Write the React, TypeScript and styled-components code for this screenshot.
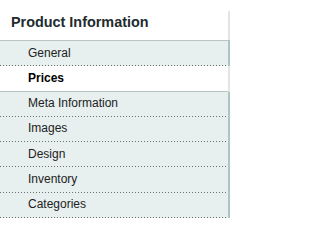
import React from "react";
import styled, { createGlobalStyle } from "styled-components";

const Global = createGlobalStyle`
  html, body { margin: 0; padding: 0; background: #fff; }
  body { font-family: "Liberation Sans", Arial, sans-serif; font-size: 12px; }
`;

const Sidebar = styled.aside`
  width: 228px;
  margin-top: 11px;
  padding-top: 2px;
  border-right: 2px solid #e4e4e4;
`;

const Heading = styled.h3`
  margin: 0 0 9px;
  padding: 0 0 0 11px;
  font-size: 14.4px;
  line-height: 18px;
  font-weight: bold;
  color: #222b2e;
`;

const Tabs = styled.ul`
  list-style: none;
  margin: 0 -2px 0 0;
  padding: 0;
  border-top: 1px solid #bcc3c3;
`;

const Tab = styled.li<{ $active?: boolean; $solid?: boolean }>`
  padding: 4.5px 0 5.2px 28px;
  line-height: 15.6px;
  font-size: 12px;
  color: ${(p) => (p.$active ? "#000" : "#222")};
  font-weight: ${(p) => (p.$active ? "bold" : "normal")};
  border-right: 2px solid ${(p) => (p.$active ? "#e4e4e4" : "#aec3c3")};
  background: ${(p) =>
    p.$solid
      ? `linear-gradient(#bcc3c3, #bcc3c3) left bottom / 100% 1px no-repeat`
      : `repeating-linear-gradient(90deg, #6a6f6f 0 1px, transparent 1px 3px) left bottom / 100% 1px no-repeat`},
    ${(p) => (p.$active ? "#fff" : "#e7efef")};
`;

const items = [
  "General",
  "Prices",
  "Meta Information",
  "Images",
  "Design",
  "Inventory",
  "Categories",
];

export default function App() {
  return (
    <>
      <Global />
      <Sidebar>
        <Heading>Product Information</Heading>
        <Tabs>
          {items.map((t) => (
            <Tab key={t} $active={t === "Prices"} $solid={t === "Prices"}>
              {t}
            </Tab>
          ))}
        </Tabs>
      </Sidebar>
    </>
  );
}
